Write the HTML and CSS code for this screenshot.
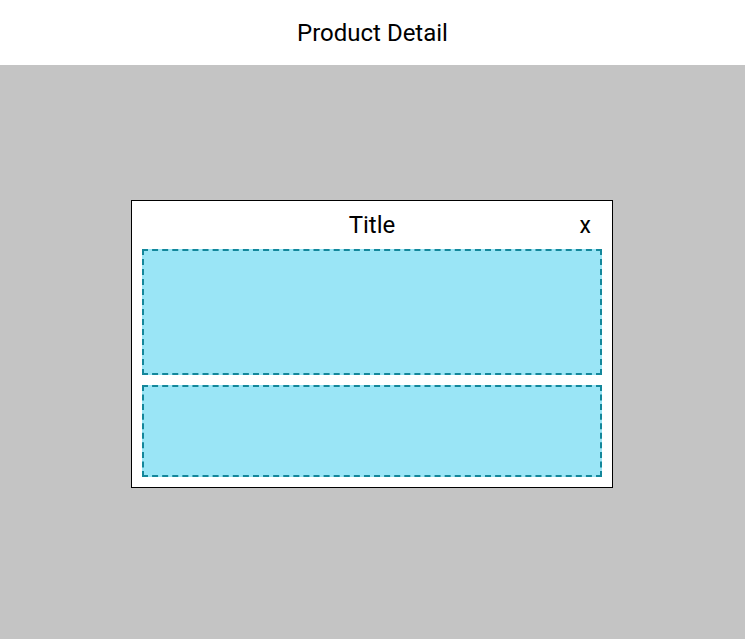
FILE: index.html
```html
<!DOCTYPE html>
<html>
<head>
<meta charset="utf-8">
<link rel="stylesheet" href="styles.css">
</head>
<body>
<header class="topbar">Product Detail</header>
<main class="backdrop">
  <div class="modal">
    <div class="modal-head">
      <span class="modal-title">Title</span>
      <span class="modal-close">x</span>
    </div>
    <div class="slot slot-a"></div>
    <div class="slot slot-b"></div>
  </div>
</main>
</body>
</html>
```
FILE: styles.css
```css
html, body {
  margin: 0;
  padding: 0;
  height: 100%;
}
body {
  font-family: Roboto, "Liberation Sans", sans-serif;
  display: flex;
  flex-direction: column;
  background: #c4c4c4;
}
.topbar {
  height: 65px;
  flex: none;
  background: #fff;
  display: flex;
  align-items: center;
  justify-content: center;
  font-size: 24px;
  padding-top: 1px;
  box-sizing: border-box;
  color: #000;
}
.backdrop {
  flex: 1;
  background: #c4c4c4;
  padding-top: 135px;
  padding-left: 131px;
}
.modal {
  box-sizing: border-box;
  width: 482px;
  border: 1px solid #000;
  background: #fff;
  padding: 0 10px 10px;
  display: flex;
  flex-direction: column;
}
.modal-head {
  height: 48px;
  position: relative;
  display: flex;
  align-items: center;
  justify-content: center;
}
.modal-title {
  font-size: 24px;
  line-height: 1;
}
.modal-close {
  position: absolute;
  right: 11px;
  top: 13px;
  font-size: 23px;
  line-height: 1;
}
.slot {
  box-sizing: border-box;
  background: #9ae5f6;
  border: 2px dashed #13879b;
}
.slot-a { height: 126px; }
.slot-b { height: 92px; margin-top: 10px; }
```
